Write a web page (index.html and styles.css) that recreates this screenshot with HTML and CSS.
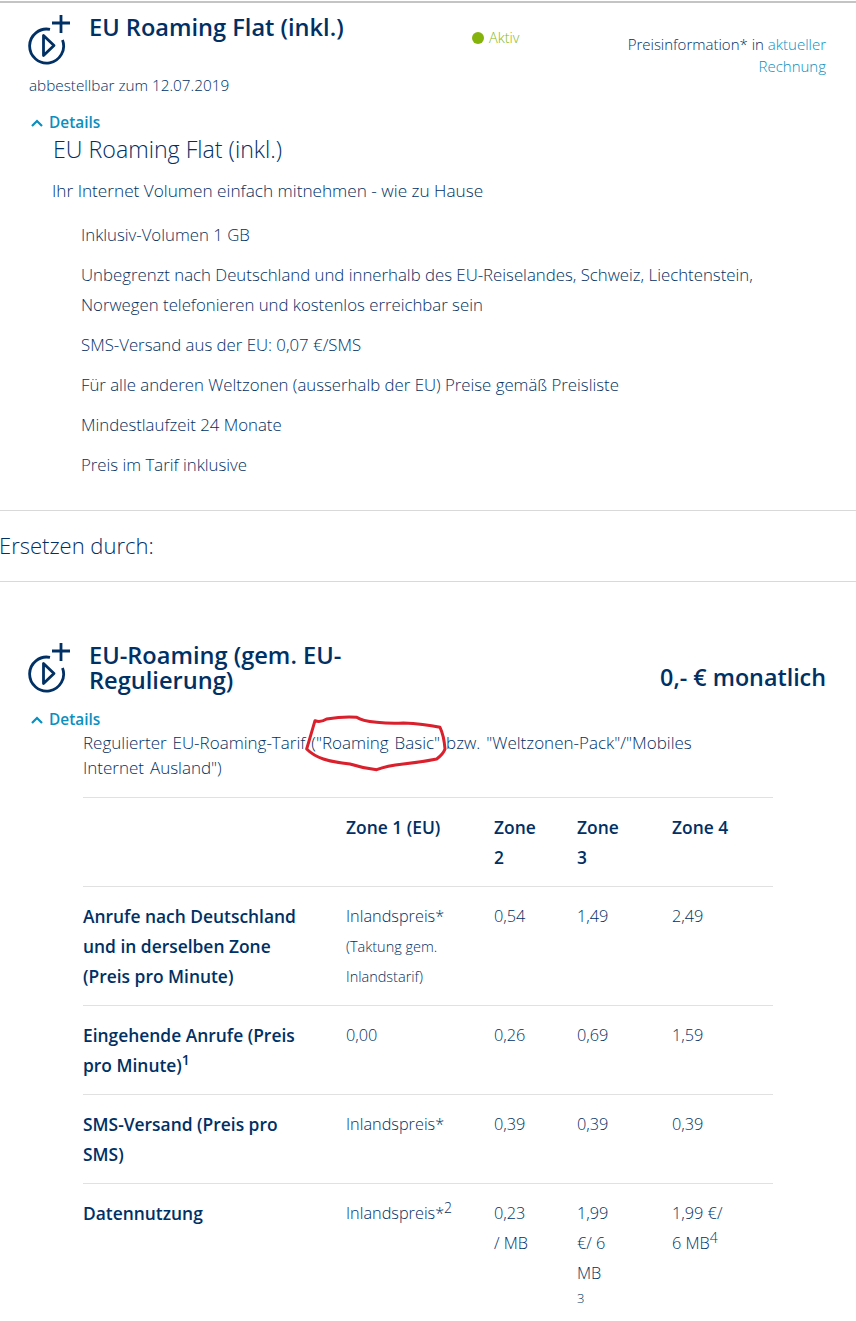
FILE: index.html
```html
<!DOCTYPE html>
<html lang="de">
<head>
  <meta charset="UTF-8" />
  <title>EU Roaming</title>
  <link rel="stylesheet" href="styles.css">
</head>
<body>

  <section class="option option-current">
    <div class="option-head">
      <svg class="option-icon" viewBox="0 0 44 50" fill="none" stroke="#003064" stroke-width="2.8">
        <path d="M22 14.4A17 17 0 1 0 34.5 25"/>
        <path d="M15.5 20.5v20l10.5-10z" stroke-linejoin="round"/>
        <path d="M24 8h18M33 0v18"/>
      </svg>
      <h2 class="option-title">EU Roaming Flat (inkl.)</h2>
      <div class="status"><span class="status-dot"></span>Aktiv</div>
      <div class="price-info">Preisinformation* in <a href="#">aktueller Rechnung</a></div>
    </div>
    <p class="cancel-note">abbestellbar zum 12.07.2019</p>
    <a class="details-link" href="#">
      <svg viewBox="0 0 12 8" fill="none" stroke="#0a8fc0" stroke-width="2.2"><path d="M1 7l5-5 5 5"/></svg>Details
    </a>
    <div class="details-body">
      <h3>EU Roaming Flat (inkl.)</h3>
      <p class="details-lead">Ihr Internet Volumen einfach mitnehmen - wie zu Hause</p>
      <ul class="feature-list">
        <li>Inklusiv-Volumen 1 GB</li>
        <li>Unbegrenzt nach Deutschland und innerhalb des EU-Reiselandes, Schweiz, Liechtenstein, Norwegen telefonieren und kostenlos erreichbar sein</li>
        <li>SMS-Versand aus der EU: 0,07 €/SMS</li>
        <li>Für alle anderen Weltzonen (ausserhalb der EU) Preise gemäß Preisliste</li>
        <li>Mindestlaufzeit 24 Monate</li>
        <li>Preis im Tarif inklusive</li>
      </ul>
    </div>
  </section>

  <h2 class="replace-title">Ersetzen durch:</h2>

  <section class="option option-new">
    <div class="option-head">
      <svg class="option-icon" viewBox="0 0 44 50" fill="none" stroke="#003064" stroke-width="2.8">
        <path d="M22 14.4A17 17 0 1 0 34.5 25"/>
        <path d="M15.5 20.5v20l10.5-10z" stroke-linejoin="round"/>
        <path d="M24 8h18M33 0v18"/>
      </svg>
      <h2 class="option-title option-title-narrow">EU-Roaming (gem. EU-Regulierung)</h2>
      <div class="monthly-price">0,- € monatlich</div>
    </div>
    <a class="details-link" href="#">
      <svg viewBox="0 0 12 8" fill="none" stroke="#0a8fc0" stroke-width="2.2"><path d="M1 7l5-5 5 5"/></svg>Details
    </a>
    <div class="tariff">
      <p class="tariff-lead">Regulierter EU-Roaming-Tarif ("Roaming Basic" bzw. "Weltzonen-Pack"/"Mobiles Internet Ausland")</p>
      <svg class="scribble" viewBox="0 0 540 270" fill="none" stroke="#d9202c" stroke-width="9" stroke-linecap="round" stroke-linejoin="round">
        <path d="M75 65Q90 72 110 60Q160 52 200 55Q215 66 260 70Q300 74 340 72Q400 74 450 85Q462 110 465 150Q460 165 440 180Q390 190 340 195Q290 200 260 212Q220 208 180 195Q130 190 100 180Q70 170 50 150Q62 110 75 65z"/>
      </svg>
      <table class="zones">
        <thead>
          <tr>
            <th class="col-label"></th>
            <th class="col-zone1">Zone 1 (EU)</th>
            <th class="col-zone2">Zone 2</th>
            <th class="col-zone3">Zone 3</th>
            <th class="col-zone4">Zone 4</th>
          </tr>
        </thead>
        <tbody>
          <tr>
            <th>Anrufe nach Deutschland und in derselben Zone (Preis pro Minute)</th>
            <td>Inlandspreis*<br><small>(Taktung gem. Inlandstarif)</small></td>
            <td>0,54</td>
            <td>1,49</td>
            <td>2,49</td>
          </tr>
          <tr>
            <th>Eingehende Anrufe (Preis pro Minute)<sup>1</sup></th>
            <td>0,00</td>
            <td>0,26</td>
            <td>0,69</td>
            <td>1,59</td>
          </tr>
          <tr>
            <th>SMS-Versand (Preis pro SMS)</th>
            <td>Inlandspreis*</td>
            <td>0,39</td>
            <td>0,39</td>
            <td>0,39</td>
          </tr>
          <tr>
            <th>Datennutzung</th>
            <td>Inlandspreis*<sup>2</sup></td>
            <td>0,23 / MB</td>
            <td>1,99 €/ 6 MB<sup class="note-below">3</sup></td>
            <td>1,99 €/ 6 MB<sup>4</sup></td>
          </tr>
        </tbody>
      </table>
    </div>
  </section>

</body>
</html>
```

FILE: styles.css
```css
* {
  margin: 0;
  padding: 0;
  box-sizing: border-box;
}

html, body {
  background: white;
}

body {
  font-family: 'Open Sans', sans-serif;
  font-weight: 300;
  font-size: 17px;
  color: #003064;
  overflow-x: hidden;
}

a {
  color: #0a8fc0;
  text-decoration: none;
}

.option-current {
  border-top: 2px solid #c4c4c4;
  margin-top: 1px;
  padding-bottom: 20px;
  border-bottom: 1px solid #d9d9d9;
}

.option-head {
  display: flex;
  padding: 12px 30px 0 28px;
}

.option-icon {
  width: 44px;
  height: 50px;
  flex: none;
}

.option-title {
  font-size: 23.6px;
  font-weight: 600;
  line-height: 25px;
  margin-left: 17px;
  width: 302px;
  flex: none;
}

.status {
  align-self: flex-start;
  color: #84b818;
  font-size: 14.5px;
  line-height: 20px;
  margin-left: 81px;
  margin-top: 13px;
  display: flex;
  align-items: center;
  gap: 5px;
}

.status-dot {
  width: 12px;
  height: 12px;
  border-radius: 50%;
  background: #84b40c;
}

.price-info {
  margin-left: auto;
  width: 210px;
  text-align: right;
  font-size: 15px;
  line-height: 22px;
  margin-top: 18px;
}

.cancel-note {
  font-size: 15.3px;
  line-height: 20px;
  margin: -2px 0 0 29px;
}

.details-link {
  display: flex;
  align-items: center;
  gap: 6px;
  font-weight: 600;
  font-size: 15.4px;
  line-height: 20px;
  margin: 18px 0 0 31px;
}

.details-link svg {
  width: 12px;
  height: 8px;
}

.details-body {
  padding-left: 52px;
}

.details-body h3 {
  font-size: 23.2px;
  font-weight: 300;
  line-height: 30px;
  margin: 1px 0 0 1px;
}

.details-lead {
  font-size: 17.2px;
  line-height: 30px;
  margin-top: 12px;
}

.feature-list {
  list-style: none;
  font-size: 16.8px;
  margin: 14px 60px 0 29px;
}

.feature-list li {
  line-height: 30px;
  margin-bottom: 10px;
}

.replace-title {
  font-size: 22px;
  font-weight: 300;
  line-height: 30px;
  margin-left: -1px;
  padding: 19px 0;
  height: 71px;
  border-bottom: 1px solid #d9d9d9;
}

.option-new {
  padding-top: 49px;
}

.option-new .details-link {
  margin-top: 17px;
}

.option-title-narrow {
  width: 290px;
}

.monthly-price {
  margin-left: auto;
  font-size: 23.3px;
  font-weight: 600;
  line-height: 30px;
  margin-top: 19px;
}

.tariff {
  position: relative;
  padding: 0 83px;
}

.tariff-lead {
  line-height: 25px;
  padding-bottom: 17px;
  max-width: 650px;
  word-spacing: 1.5px;
}

/* hand-drawn marker over the text */
.scribble {
  position: absolute;
  left: 290px;
  top: -31px;
  width: 180px;
  height: 90px;
}

.zones {
  width: 690px;
  border-collapse: collapse;
  table-layout: fixed;
  font-size: 16.3px;
}

.zones tr {
  border-top: 1px solid #e1e1e1;
}

.zones th,
.zones td {
  text-align: left;
  vertical-align: top;
  line-height: 30px;
  padding: 14px 30px 14px 0;
}

.zones th {
  font-size: 17.4px;
  font-weight: 600;
}

.zones tbody th {
  padding-right: 35px;
}

.zones th:nth-child(3),
.zones td:nth-child(3) {
  padding-right: 42px;
}

.zones th:nth-child(4),
.zones td:nth-child(4) {
  padding-right: 47px;
}

.zones td:nth-child(5) {
  padding-right: 41px;
}

.col-label {
  width: 263px;
}

.col-zone1 {
  width: 148px;
}

.col-zone2 {
  width: 83px;
}

.col-zone3 {
  width: 95px;
}

.zones small {
  font-size: 14.5px;
  line-height: 1;
}

.zones sup {
  font-size: 14px;
  line-height: 0;
}

.zones .note-below {
  display: block;
  font-size: 13px;
  line-height: 20px;
  vertical-align: baseline;
}
```
